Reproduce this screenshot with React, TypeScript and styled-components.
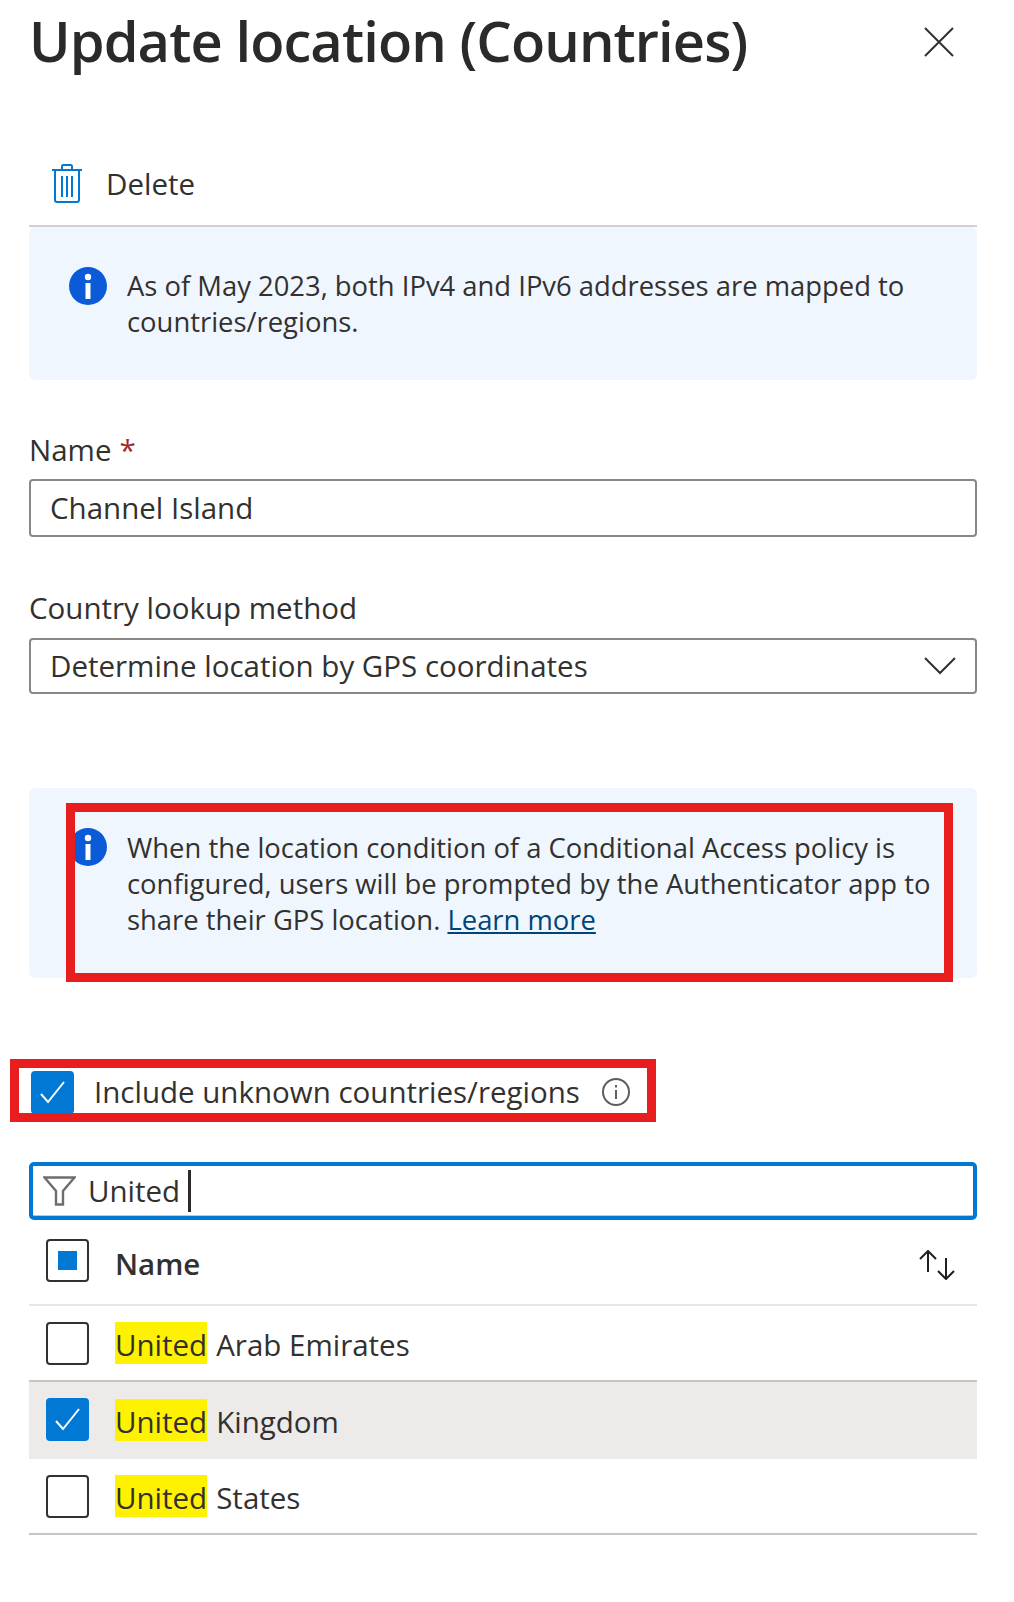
import React from 'react'
import styled, { createGlobalStyle } from 'styled-components'

const GlobalStyle = createGlobalStyle`
  html, body {
    margin: 0;
    padding: 0;
    background: #fff;
  }
  * {
    box-sizing: border-box;
  }
`

const Page = styled.div`
  width: 1014px;
  height: 1602px;
  padding: 0 37px 0 29px;
  font-family: "Open Sans", "Noto Sans", sans-serif;
  font-size: 29.5px;
  line-height: 36px;
  color: #323130;
  overflow: hidden;
`

const Header = styled.header`
  display: flex;
  justify-content: space-between;
  align-items: center;
  height: 84px;
  padding: 0 23px 0 0;
`

const Title = styled.h1`
  margin: -4px 0 0;
  font-size: 56px;
  line-height: 84px;
  font-weight: 600;
  letter-spacing: -0.9px;
  color: #2b2a29;
  white-space: nowrap;
`

const Toolbar = styled.div`
  display: flex;
  align-items: center;
  gap: 23px;
  height: 77px;
  margin-top: 66px;
  padding: 0 0 8px 22px;
  border-bottom: 2px solid #d2d0ce;
`

const InfoBox = styled.div<{ $height: number; $marginTop?: number }>`
  position: relative;
  display: flex;
  align-items: flex-start;
  gap: 20px;
  height: ${p => p.$height}px;
  margin-top: ${p => p.$marginTop ?? 0}px;
  padding: 40px 30px 0 40px;
  background: #eff6fe;
  border-radius: 6px;
`

const InfoText = styled.p<{ $shift: number }>`
  margin: ${p => p.$shift}px 0 0;
  flex: 1;
  font-size: 27.4px;
`

const InfoLink = styled.a`
  color: #004578;
  text-decoration: underline;
`

const Marker = styled.div<{ $left: number; $top: number; $width: number; $height: number }>`
  position: absolute;
  left: ${p => p.$left}px;
  top: ${p => p.$top}px;
  width: ${p => p.$width}px;
  height: ${p => p.$height}px;
  border: 9px solid #e81e1e;
  pointer-events: none;
`

const Label = styled.label<{ $marginTop: number }>`
  display: block;
  margin-top: ${p => p.$marginTop}px;
  height: 36px;
`

const Required = styled.span`
  color: #a4262c;
  margin-left: 8px;
`

const Field = styled.div<{ $height: number; $marginTop: number }>`
  display: flex;
  justify-content: space-between;
  align-items: center;
  height: ${p => p.$height}px;
  margin-top: ${p => p.$marginTop}px;
  padding: 0 19px;
  border: 2px solid #8a8886;
  border-radius: 4px;
  white-space: nowrap;
`

const CheckRow = styled.div`
  position: relative;
  display: flex;
  align-items: center;
  height: 42px;
  margin-top: 93px;
  padding-left: 2px;
`

const CheckLabel = styled.span`
  margin-left: 20px;
  white-space: nowrap;
`

const Check = styled.span<{ $checked?: boolean }>`
  display: flex;
  align-items: center;
  justify-content: center;
  flex: none;
  width: 43px;
  height: 43px;
  border-radius: 4px;
  background: ${p => (p.$checked ? '#0078d4' : '#fff')};
  border: 2px solid ${p => (p.$checked ? '#0078d4' : '#323130')};
`

const PartialMark = styled.span`
  width: 19px;
  height: 19px;
  background: #0078d4;
`

const FilterBox = styled.div`
  display: flex;
  align-items: center;
  height: 58px;
  margin-top: 49px;
  padding: 0 0 0 10px;
  border: 4px solid #0078d4;
  border-radius: 5px;
  box-shadow: inset 0 -1px 0 #c8c6c4;
`

const FilterValue = styled.span`
  margin-left: 12px;
`

const Caret = styled.span`
  width: 3px;
  height: 42px;
  margin-left: 8px;
  background: #2b2a29;
`

const Row = styled.div<{ $height: number; $selected?: boolean; $line: string }>`
  display: flex;
  align-items: center;
  gap: 26px;
  height: ${p => p.$height}px;
  padding-left: 17px;
  background: ${p => (p.$selected ? '#edebe9' : 'transparent')};
  border-bottom: 2px solid ${p => p.$line};
`

const HeadRow = styled(Row)`
  padding-bottom: 4px;
  padding-right: 21px;
`

const HeadName = styled.span`
  flex: 1;
  margin-top: 7px;
  font-weight: 600;
`

const SortIcon = styled.svg`
  margin-top: 9px;
`

const RowText = styled.span`
  display: flex;
  align-items: flex-start;
  height: 42px;
  line-height: 46px;
  white-space: nowrap;
`

const Match = styled.mark`
  height: 42px;
  margin-right: 9px;
  background: #fff200;
  color: inherit;
`

const TrashIcon = () => (
  <svg width="32" height="39" viewBox="0 0 32 39" fill="none" stroke="#0078d4" strokeWidth="2">
    <path d="M1 6h30M4 6v30a2 2 0 0 0 2 2h20a2 2 0 0 0 2-2V6M11 5V2.2A1.2 1.2 0 0 1 12.2 1h7.6A1.2 1.2 0 0 1 21 2.2V5" />
    <path d="M11 12v21M16 12v21M21 12v21" />
  </svg>
)

const InfoIcon = () => (
  <svg width="38" height="38" viewBox="0 0 38 38" style={{ flex: 'none' }}>
    <circle cx="19" cy="19" r="19" fill="#0b5bd8" />
    <circle cx="19" cy="10" r="3.2" fill="#fff" />
    <rect x="16.5" y="16" width="5" height="16" fill="#fff" />
  </svg>
)

const CheckMark = () => (
  <svg width="29" height="29" viewBox="0 0 29 29" fill="none" stroke="#fff" strokeWidth="2">
    <path d="M3 16l7 8L26 4" />
  </svg>
)

export default function App() {
  const countries = [
    { rest: 'Arab Emirates', height: 76, line: '#c8c6c4' },
    { rest: 'Kingdom', height: 77, selected: true, line: '#edebe9' },
    { rest: 'States', height: 76, line: '#c8c6c4' },
  ]

  return (
    <Page>
      <GlobalStyle />
      <Header>
        <Title>Update location (Countries)</Title>
        <svg width="30" height="30" viewBox="0 0 30 30" stroke="#323130" strokeWidth="2">
          <path d="M1 1l28 28M29 1L1 29" />
        </svg>
      </Header>

      <Toolbar>
        <TrashIcon />
        <span>Delete</span>
      </Toolbar>

      <InfoBox $height={153}>
        <InfoIcon />
        <InfoText $shift={1}>As of May 2023, both IPv4 and IPv6 addresses are mapped to countries/regions.</InfoText>
      </InfoBox>

      <Label $marginTop={52}>
        Name<Required>*</Required>
      </Label>
      <Field $height={58} $marginTop={11}>Channel Island</Field>

      <Label $marginTop={53}>Country lookup method</Label>
      <Field $height={56} $marginTop={12}>
        Determine location by GPS coordinates
        <svg width="32" height="18" viewBox="0 0 32 18" fill="none" stroke="#323130" strokeWidth="2">
          <path d="M1 1l15 15L31 1" />
        </svg>
      </Field>

      <InfoBox $height={190} $marginTop={94}>
        <InfoIcon />
        <InfoText $shift={2}>
          When the location condition of a Conditional Access policy is configured, users will be prompted by the
          Authenticator app to share their GPS location. <InfoLink href="#">Learn more</InfoLink>
        </InfoText>
        <Marker $left={37} $top={15} $width={887} $height={179} />
      </InfoBox>

      <CheckRow>
        <Check $checked><CheckMark /></Check>
        <CheckLabel>Include unknown countries/regions</CheckLabel>
        <svg width="28" height="28" viewBox="0 0 28 28" fill="none" stroke="#605e5c" strokeWidth="2" style={{ marginLeft: 22 }}>
          <circle cx="14" cy="14" r="13" />
          <path d="M14 12v9M14 7v2.4" />
        </svg>
        <Marker $left={-19} $top={-12} $width={646} $height={63} />
      </CheckRow>

      <FilterBox>
        <svg width="33" height="30" viewBox="0 0 33 30" fill="none" stroke="#6e6d6b" strokeWidth="2.4">
          <path d="M1.5 1.5h30L20 15v13.5h-7V15z" />
        </svg>
        <FilterValue>United</FilterValue>
        <Caret />
      </FilterBox>

      <HeadRow $height={86} $line="#e8e6e4">
        <Check><PartialMark /></Check>
        <HeadName>Name</HeadName>
        <SortIcon width="38" height="30" viewBox="0 0 38 30" fill="none" stroke="#201f1e" strokeWidth="2">
          <path d="M10 22V2M2 9l8-8 8 8M28 8v20M20 21l8 8 8-8" />
        </SortIcon>
      </HeadRow>

      {countries.map(c => (
        <Row key={c.rest} $height={c.height} $selected={c.selected} $line={c.line}>
          <Check $checked={c.selected}>{c.selected && <CheckMark />}</Check>
          <RowText>
            <Match>United</Match>
            {c.rest}
          </RowText>
        </Row>
      ))}
    </Page>
  )
}
